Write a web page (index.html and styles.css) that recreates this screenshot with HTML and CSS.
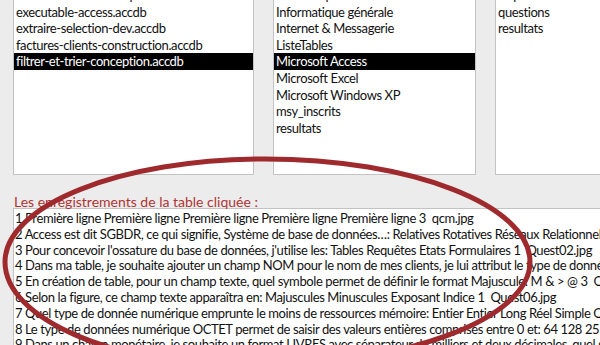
FILE: index.html
```html
<!DOCTYPE html>
<html lang="fr">
<head>
    <meta charset="UTF-8">
    <title>Tables et enregistrements</title>
    <link rel="stylesheet" href="styles.css">
</head>
<body>
    <div class="lists">
        <div class="listbox list-files">
            <div class="item">donnees-externes-import.accdb</div>
            <div class="item">executable-access.accdb</div>
            <div class="item">extraire-selection-dev.accdb</div>
            <div class="item">factures-clients-construction.accdb</div>
            <div class="item selected">filtrer-et-trier-conception.accdb</div>
        </div>
        <div class="listbox list-tables">
            <div class="item">Bureautique</div>
            <div class="item">Informatique générale</div>
            <div class="item">Internet &amp; Messagerie</div>
            <div class="item">ListeTables</div>
            <div class="item selected">Microsoft Access</div>
            <div class="item">Microsoft Excel</div>
            <div class="item">Microsoft Windows XP</div>
            <div class="item">msy_inscrits</div>
            <div class="item">resultats</div>
        </div>
        <div class="listbox list-other">
            <div class="item">Copie</div>
            <div class="item">questions</div>
            <div class="item">resultats</div>
        </div>
    </div>

    <div class="section-title">Les enregistrements de la table cliquée :</div>
    <div class="listbox records">
        <div class="item">1 Première ligne Première ligne Première ligne Première ligne Première ligne 3&nbsp; qcm.jpg</div>
        <div class="item">2 Access est dit SGBDR, ce qui signifie, Système de base de données…: Relatives Rotatives Réseaux Relationnelles 4&nbsp; Quest01.jpg</div>
        <div class="item">3 Pour concevoir l'ossature du base de données, j'utilise les: Tables Requêtes Etats Formulaires 1&nbsp; Quest02.jpg</div>
        <div class="item">4 Dans ma table, je souhaite ajouter un champ NOM pour le nom de mes clients, je lui attribut le type de donnée: Texte</div>
        <div class="item">5 En création de table, pour un champ texte, quel symbole permet de définir le format Majuscule: M &amp; &gt; @ 3&nbsp; Quest05.jpg</div>
        <div class="item">6 Selon la figure, ce champ texte apparaîtra en: Majuscules Minuscules Exposant Indice 1&nbsp; Quest06.jpg</div>
        <div class="item">7 Quel type de donnée numérique emprunte le moins de ressources mémoire: Entier Entier Long Réel Simple Octet 4</div>
        <div class="item">8 Le type de données numérique OCTET permet de saisir des valeurs entières comprises entre 0 et: 64 128 255 256 3</div>
        <div class="item">9 Dans un champ monétaire, je souhaite un format LIVRES avec séparateur de milliers et deux décimales, quel symbole</div>
    </div>

    <!-- annotation tracée à la main par-dessus la capture -->
    <svg class="circle-mark" width="600" height="345" viewBox="0 0 600 345">
        <path d="M5 262 C5 205 121 159 265 159 C411 159 530 205 530 262 C530 319 404 366 248 366 C114 366 5 319 5 262 Z"
              fill="none" stroke="#9f2a2e" stroke-width="5"/>
    </svg>
</body>
</html>
```

FILE: styles.css
```css
body {
    margin: 0;
    width: 600px;
    height: 345px;
    overflow: hidden;
    position: relative;
    background: #ececec;
    font-family: Lato, "Liberation Sans", sans-serif;
    font-size: 13px;
    letter-spacing: -0.4px;
    color: #111;
}
.lists {
    display: flex;
    gap: 19px;
    margin-top: -14px;
    padding-left: 13px;
}
.listbox {
    box-sizing: border-box;
    background: #fff;
    border: 1px solid #c3c3c3;
    overflow: hidden;
    white-space: nowrap;
}
.list-files {
    width: 241px;
    height: 189px;
    flex: none;
}
.list-tables {
    width: 203px;
    height: 189px;
    flex: none;
}
.list-other {
    width: 150px;
    height: 189px;
    flex: none;
}
.lists .item {
    height: 16.6px;
    line-height: 16.6px;
    padding-left: 2px;
}
.item.selected {
    background: #000;
    color: #fff;
}
.section-title {
    margin: 20px 0 0 14px;
    font-size: 14px;
    letter-spacing: 0;
    line-height: 13px;
    color: #b03434;
}
.records {
    margin-left: 13px;
    width: 640px;
    height: 200px;
    padding-top: 2px;
}
.records .item {
    height: 15.8px;
    line-height: 15.8px;
    padding-left: 1px;
}
.circle-mark {
    position: absolute;
    top: 0;
    left: 0;
    pointer-events: none;
}
```
